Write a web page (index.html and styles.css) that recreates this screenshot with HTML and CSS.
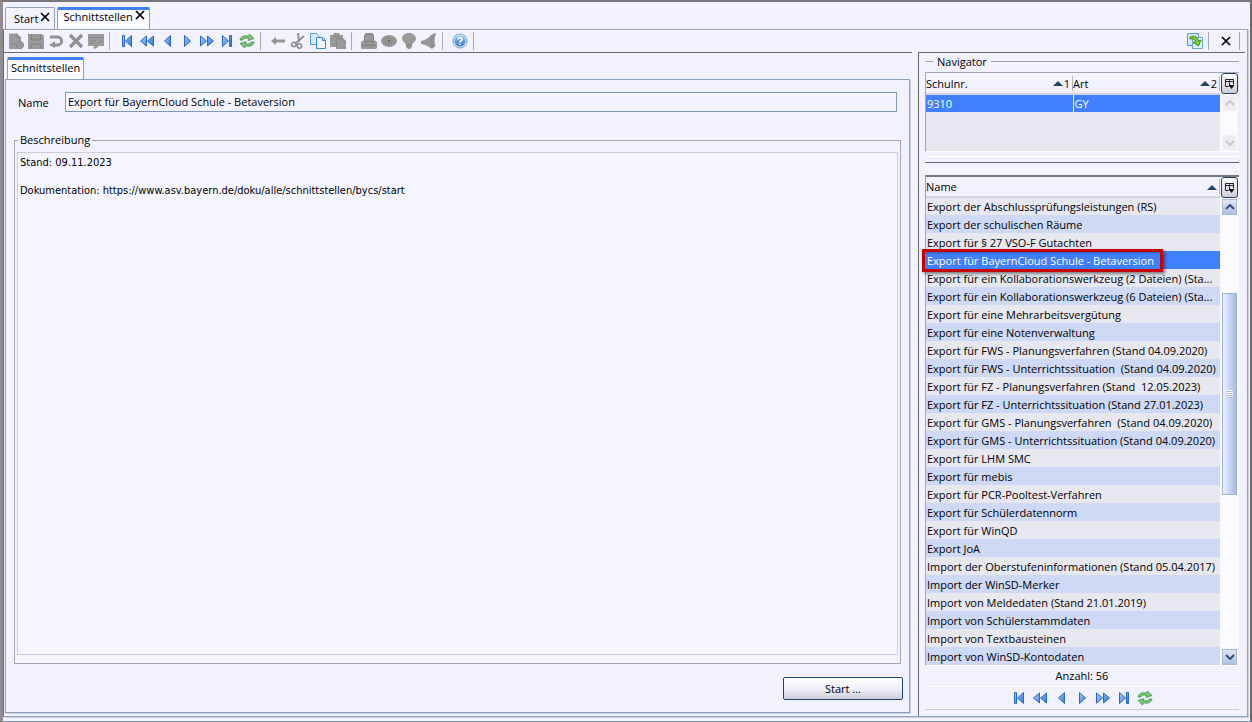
FILE: index.html
```html
<!DOCTYPE html>
<html lang="de">
<head>
<meta charset="utf-8">
<title>Schnittstellen</title>
<link rel="stylesheet" href="styles.css">
</head>
<body>
<svg class="defs" aria-hidden="true">
  <defs>
    <linearGradient id="blue" x1="0" y1="0" x2="1" y2="1"><stop offset="0" stop-color="#a6d0f8"/><stop offset="1" stop-color="#2f74d8"/></linearGradient>
    <linearGradient id="help" x1="0" y1="0" x2="0" y2="1"><stop offset="0" stop-color="#8fbdec"/><stop offset="1" stop-color="#3a78c0"/></linearGradient>
    <symbol id="first" viewBox="0 0 16 16"><path d="M3.500 2.500h2v11h-2zM12.500 2.500v11L6.500 8z" fill="url(#blue)" stroke="#2a68c8"/></symbol>
    <symbol id="rewind" viewBox="0 0 16 16"><path d="M7.500 3v10L1.500 8zM14.500 3v10L8.500 8z" fill="url(#blue)" stroke="#2a68c8"/></symbol>
    <symbol id="prev" viewBox="0 0 16 16"><path d="M11.500 2.500v11L5.500 8z" fill="url(#blue)" stroke="#2a68c8"/></symbol>
    <symbol id="next" viewBox="0 0 16 16"><path d="M5.500 2.500v11L11.500 8z" fill="url(#blue)" stroke="#2a68c8"/></symbol>
    <symbol id="forward" viewBox="0 0 16 16"><path d="M1.500 3v10L7.500 8zM8.500 3v10L14.500 8z" fill="url(#blue)" stroke="#2a68c8"/></symbol>
    <symbol id="last" viewBox="0 0 16 16"><path d="M3.500 2.500v11L9.500 8zM10.500 2.500h2v11h-2z" fill="url(#blue)" stroke="#2a68c8"/></symbol>
    <symbol id="refresh" viewBox="0 0 16 16"><path d="M1 7C1.500 3.500 5 2 9.500 3.200L10.500 1l4.500 4.500-6 2 .6-2C6.500 4.600 4.500 5.200 4 7zM15 9c-.5 3.500-4 5-8.500 3.800L5.500 15 1 10.500l6-2-.6 2c3 .9 5 .3 5.600-1.500z" fill="#7cc47a" stroke="#3d9444" stroke-width=".8"/></symbol>
    <symbol id="columns" viewBox="0 0 12 12"><path d="M1.500 1.500h8v5M1.500 1.500v7h3M1.500 3.500h8M5.500 1.500v7" fill="none" stroke="#222"/><path d="M4.500 7h6l-3 4z" fill="#111"/></symbol>
    <symbol id="close" viewBox="0 0 10 10"><path d="M1 1l8 8M9 1L1 9" stroke="#000" stroke-width="1.700"/></symbol>
    <symbol id="up" viewBox="0 0 10 6"><path d="M1 5l4-4 4 4" fill="none" stroke="currentColor" stroke-width="2"/></symbol>
    <symbol id="down" viewBox="0 0 10 6"><path d="M1 1l4 4 4-4" fill="none" stroke="currentColor" stroke-width="2"/></symbol>
  </defs>
</svg>
<div class="window">
  <nav class="tabs">
    <button class="tab tab-inactive">Start<svg class="x"><use href="#close"/></svg></button>
    <button class="tab tab-active">Schnittstellen<svg class="x"><use href="#close"/></svg></button>
  </nav>
  <div class="frame">
    <header class="toolbar">
      <div class="tools">
        <button class="tool" aria-label="Neu" disabled><svg viewBox="0 0 16 16"><path d="M1 1.500q0-1 1-1h7l4 4v5.500h1v1h1.500v3H14V16H2q-1 0-1-1z" fill="#9b9b9b"/><path d="M9 .5v4h4M3 11h5" stroke="#858585" fill="none"/><circle cx="12" cy="12" r="3.500" fill="#a2a2a2" stroke="#858585"/><path d="M10 12h4M12 10v4" stroke="#858585"/></svg></button>
        <button class="tool" aria-label="Speichern" disabled><svg viewBox="0 0 16 16"><path d="M0 1h14l2 2v13H0z" fill="#999"/><path d="M3.500 1v6h9V1M3.500 16v-5h9v5" stroke="#838383" fill="none"/></svg></button>
        <button class="tool" aria-label="Rückgängig" disabled><svg viewBox="0 0 16 16"><path d="M2 4h7.500C15 4 15 12 9.500 12H6" fill="none" stroke="#929292" stroke-width="3"/><path d="M7 8v7L1 12z" fill="#929292"/></svg></button>
        <button class="tool" aria-label="Löschen" disabled><svg viewBox="0 0 16 16"><path d="M2 2l12 12M14 2L2 14" stroke="#909090" stroke-width="3.200"/></svg></button>
        <button class="tool" aria-label="Bearbeiten" disabled><svg viewBox="0 0 16 16"><path d="M0 1h16v12h-5l-3 2.500H5L6 13H0z" fill="#9b9b9b"/><path d="M0 4.500h16M2 8h6M2 10.500h4M7 13l7-6" stroke="#888"/></svg></button>
        <span class="sep"></span>
        <button class="tool" aria-label="Erster"><svg><use href="#first"/></svg></button>
        <button class="tool" aria-label="Schnell zurück"><svg><use href="#rewind"/></svg></button>
        <button class="tool" aria-label="Zurück"><svg><use href="#prev"/></svg></button>
        <button class="tool" aria-label="Weiter"><svg><use href="#next"/></svg></button>
        <button class="tool" aria-label="Schnell weiter"><svg><use href="#forward"/></svg></button>
        <button class="tool" aria-label="Letzter"><svg><use href="#last"/></svg></button>
        <button class="tool" aria-label="Aktualisieren"><svg><use href="#refresh"/></svg></button>
        <span class="sep"></span>
        <button class="tool" aria-label="Pfeil" disabled><svg viewBox="0 0 16 16"><path d="M1 8l5-4v2.500h9v3H6V12z" fill="#939393"/></svg></button>
        <button class="tool" aria-label="Ausschneiden" disabled><svg viewBox="0 0 16 16"><path d="M8 0l1 9M14 3L5 11" stroke="#929292" stroke-width="2"/><circle cx="4" cy="11.500" r="2.200" fill="none" stroke="#8c8c8c" stroke-width="1.600"/><circle cx="9.500" cy="13" r="2.200" fill="none" stroke="#8c8c8c" stroke-width="1.600"/></svg></button>
        <button class="tool" aria-label="Kopieren"><svg viewBox="0 0 16 16"><path d="M.5.500h6l3 3v8h-9z" fill="#d9ebff" stroke="#5b97dc"/><path d="M6.500 4.500h6l3 3v8h-9z" fill="#eaf5ff" stroke="#3e86d6"/><path d="M12.500 4.500v3h3" fill="none" stroke="#3e86d6"/></svg></button>
        <button class="tool" aria-label="Einfügen" disabled><svg viewBox="0 0 16 16"><path d="M0 2h3l1-2h5l1 2h3v3l3 3v8H6v-2H0z" fill="#999"/><path d="M3 3.500h7M6.500 14V5.500H12l3.500 4" fill="none" stroke="#868686"/></svg></button>
        <span class="sep"></span>
        <button class="tool" aria-label="Drucken" disabled><svg viewBox="0 0 16 16"><path d="M5 0h6l2 2v5l3 2v6l-1 1H1l-1-1V9l3-2V2z" fill="#999"/><path d="M3.500 7V3l2-2h5l2 2v4M3 8.500h10M4.500 9v3h7V9M1 12.500h14" stroke="#818181" fill="none"/></svg></button>
        <button class="tool" aria-label="Vorschau" disabled><svg viewBox="0 0 16 16"><ellipse cx="8" cy="8" rx="8" ry="6" fill="#969696"/><circle cx="8" cy="8" r="3" fill="#a3a3a3" stroke="#858585"/><circle cx="8" cy="8" r="1.200" fill="#666"/></svg></button>
        <button class="tool" aria-label="Hinweis" disabled><svg viewBox="0 0 16 16"><path d="M8 0C4 0 1 2.500 1 5.500 1 9 5 9.500 5 12v2l2 2h2l2-2v-2c0-2.500 4-3 4-6.500C15 2.500 12 0 8 0z" fill="#999"/><path d="M5 11.500h6M5 13.500h6" stroke="#868686"/></svg></button>
        <button class="tool" aria-label="Alarm" disabled><svg viewBox="0 0 16 16"><path d="M14 0l1 1-1 3c-1 4 0 7 .5 9L12 15l-1 1-3-2C6 13 3 11 0 11V8c4-.5 7-3 10-6z" fill="#979797"/><path d="M13 2c-3 4-3 7-1 12" fill="none" stroke="#888"/></svg></button>
        <span class="sep"></span>
        <button class="tool" aria-label="Hilfe"><svg viewBox="0 0 16 16"><circle cx="8" cy="8" r="7" fill="#dcecfb" stroke="#6a9fd6"/><circle cx="8" cy="8" r="5.500" fill="url(#help)"/><path d="M6 6.500c0-3 4.200-2.500 4 0C10 8 8 7.500 8 9.500M8 10.500v1.500" fill="none" stroke="#fff" stroke-width="1.600"/></svg></button>
        <span class="sep"></span>
      </div>
      <div class="tools tools-right">
        <button class="tool" aria-label="Ansicht wechseln"><svg viewBox="0 0 16 16"><path d="M.5.500h11v12H.5z" fill="#d5e7fb" stroke="#5e94cc"/><path d="M5.500 4.500h10v11h-10z" fill="#e8f4ff" stroke="#6fa4d8"/><path d="M3 4c4-2 8 0 8.500 4L14 7l-2.500 6L6 9.500l2.500-.7C8.500 6.500 6.500 5 3 6z" fill="#86d22c" stroke="#3c8c20"/></svg></button>
        <span class="sep"></span>
        <button class="tool tool-close" aria-label="Schließen"><svg><use href="#close"/></svg></button>
        <span class="sep"></span>
      </div>
    </header>
    <div class="content">
      <main class="left">
        <div class="subtabs"><button class="tab tab-active tab-sub">Schnittstellen</button></div>
        <div class="panel">
          <div class="field"><label for="name">Name</label><input id="name" type="text" value="Export für BayernCloud Schule - Betaversion"></div>
          <fieldset class="group">
            <legend>Beschreibung</legend>
            <textarea aria-label="Beschreibung" readonly>Stand: 09.11.2023

Dokumentation: https://www.asv.bayern.de/doku/alle/schnittstellen/bycs/start</textarea>
          </fieldset>
          <div class="actions"><button class="start">Start ...</button></div>
        </div>
      </main>
      <aside class="right">
        <h2 class="nav-title">Navigator</h2>
        <div class="grid schools">
          <table>
            <thead><tr><th><div class="head">Schulnr.<span class="sort"><i class="tri"></i>1</span></div></th><th><div class="head">Art<span class="sort"><i class="tri"></i>2</span></div></th></tr></thead>
            <tbody><tr class="selected"><td>9310</td><td>GY</td></tr></tbody>
          </table>
          <div class="side">
            <button class="colbtn" aria-label="Spalten"><svg><use href="#columns"/></svg></button>
            <div class="scroll scroll-off"><button aria-label="Nach oben" disabled><svg><use href="#up"/></svg></button><button aria-label="Nach unten" disabled><svg><use href="#down"/></svg></button></div>
          </div>
        </div>
        <div class="divider"></div>
        <div class="grid exports">
          <table>
            <thead><tr><th><div class="head">Name<span class="sort"><i class="tri"></i></span></div></th></tr></thead>
            <tbody>
              <tr><td>Export der Abschlussprüfungsleistungen (RS)</td></tr>
              <tr><td>Export der schulischen Räume</td></tr>
              <tr><td>Export für § 27 VSO-F Gutachten</td></tr>
              <tr class="selected"><td><span class="mark">Export für BayernCloud Schule - Betaversion</span></td></tr>
              <tr><td>Export für ein Kollaborationswerkzeug (2 Dateien) (Sta...</td></tr>
              <tr><td>Export für ein Kollaborationswerkzeug (6 Dateien) (Sta...</td></tr>
              <tr><td>Export für eine Mehrarbeitsvergütung</td></tr>
              <tr><td>Export für eine Notenverwaltung</td></tr>
              <tr><td>Export für FWS - Planungsverfahren (Stand 04.09.2020)</td></tr>
              <tr><td>Export für FWS - Unterrichtssituation  (Stand 04.09.2020)</td></tr>
              <tr><td>Export für FZ - Planungsverfahren (Stand  12.05.2023)</td></tr>
              <tr><td>Export für FZ - Unterrichtssituation (Stand 27.01.2023)</td></tr>
              <tr><td>Export für GMS - Planungsverfahren  (Stand 04.09.2020)</td></tr>
              <tr><td>Export für GMS - Unterrichtssituation (Stand 04.09.2020)</td></tr>
              <tr><td>Export für LHM SMC</td></tr>
              <tr><td>Export für mebis</td></tr>
              <tr><td>Export für PCR-Pooltest-Verfahren</td></tr>
              <tr><td>Export für Schülerdatennorm</td></tr>
              <tr><td>Export für WinQD</td></tr>
              <tr><td>Export JoA</td></tr>
              <tr><td>Import der Oberstufeninformationen (Stand 05.04.2017)</td></tr>
              <tr><td>Import der WinSD-Merker</td></tr>
              <tr><td>Import von Meldedaten (Stand 21.01.2019)</td></tr>
              <tr><td>Import von Schülerstammdaten</td></tr>
              <tr><td>Import von Textbausteinen</td></tr>
              <tr><td>Import von WinSD-Kontodaten</td></tr>
            </tbody>
          </table>
          <div class="side">
            <button class="colbtn" aria-label="Spalten"><svg><use href="#columns"/></svg></button>
            <div class="scroll"><button aria-label="Nach oben"><svg><use href="#up"/></svg></button><div class="track"><div class="thumb"><i class="grip"></i></div></div><button aria-label="Nach unten"><svg><use href="#down"/></svg></button></div>
          </div>
        </div>
        <p class="count">Anzahl: 56</p>
        <div class="pager">
          <button class="tool" aria-label="Erster"><svg><use href="#first"/></svg></button>
          <button class="tool" aria-label="Schnell zurück"><svg><use href="#rewind"/></svg></button>
          <button class="tool" aria-label="Zurück"><svg><use href="#prev"/></svg></button>
          <button class="tool" aria-label="Weiter"><svg><use href="#next"/></svg></button>
          <button class="tool" aria-label="Schnell weiter"><svg><use href="#forward"/></svg></button>
          <button class="tool" aria-label="Letzter"><svg><use href="#last"/></svg></button>
          <button class="tool" aria-label="Aktualisieren"><svg><use href="#refresh"/></svg></button>
        </div>
      </aside>
    </div>
  </div>
</div>
</body>
</html>
```
FILE: styles.css
```css
* { box-sizing: border-box; }
body { margin: 0; background: #f2f2ff; color: #000; }
body, button, input, textarea { font: 11px/14px "Open Sans", "Noto Sans", sans-serif; }
button { border: 0; margin: 0; padding: 0; background: none; color: inherit; }
.defs { position: absolute; width: 0; height: 0; }
svg { display: block; }

.window {
  height: 100vh;
  display: flex;
  flex-direction: column;
  border: solid #68686c;
  border-width: 2px 2px 1px 3px;
  border-top-color: #77777c;
  border-left-color: #918c91;
  border-bottom-color: #8494ae;
  padding: 0 2px 4px 0;
}
.tabs { display: flex; gap: 2px; padding: 5px 0 0 2px; height: 27px; flex: none; }
.tab {
  display: flex;
  gap: 2px;
  height: 22px;
  border: 1px solid #8fa3bf;
  border-bottom: 0;
  border-radius: 2px 2px 0 0;
  padding: 4px 4px 0 8px;
  background: #f2f2ff;
}
.tab-active { background: #fafaff; border-top: 3px solid #3f7ff5; padding: 0 4px 0 5px; }
.tab-sub { padding: 1px 3px 0; }
.x { width: 10px; height: 10px; }

.frame {
  flex: 1;
  min-height: 0;
  display: flex;
  flex-direction: column;
  border: 1px solid #8fa3bf;
  border-left-color: #68686c;
  box-shadow: 1px 1px 0 #c8d0e0;
}
.toolbar { display: flex; justify-content: space-between; height: 22px; flex: none; border-top: 1px solid #fff; padding-bottom: 1px; }
.tools { display: flex; align-items: center; gap: 4px; padding-left: 4px; }
.tools-right { padding-right: 2px; }
.tool, .tool svg { width: 16px; height: 16px; }
.tool { flex: none; }
.tool-close { padding: 3px; }
.tool-close svg { width: 10px; height: 10px; }
.sep { width: 1px; height: 18px; background: #a9a9b0; margin: 0 5px 0 1px; }

.content { flex: 1; min-height: 0; display: flex; gap: 6px; padding-right: 1px; }
.left { flex: 1; min-width: 0; display: flex; flex-direction: column; border-top: 1px solid #68686c; padding: 4px 2px 3px 1px; }
.subtabs { height: 22px; padding-left: 2px; display: flex; flex: none; }
.panel {
  flex: 1;
  min-height: 0;
  display: flex;
  flex-direction: column;
  border: 1px solid #8fa3bf;
  box-shadow: 1px 1px 0 #c8d0e0;
  padding: 12px 6px 12px 8px;
}
.field { display: flex; align-items: center; padding: 0 6px 0 4px; }
.field label { width: 47px; padding-top: 2px; }
.field input { flex: 1; min-width: 0; height: 20px; border: 1px solid #8099b8; background: #f4f4ff; padding: 0 2px 2px; margin: 0; }
.group {
  flex: 1;
  min-height: 0;
  min-inline-size: 0;
  display: flex;
  margin: 21px 2px 13px 0;
  border: 1px solid #a6a6b2;
  padding: 5px 2px 8px;
}
.group legend { padding: 0 2px; margin-left: 1px; }
.group textarea {
  flex: 1;
  resize: none;
  border: 1px solid #cdcdd8;
  background: #f5f5ff;
  padding: 3px 2px;
  font-family: "DejaVu Sans Condensed", sans-serif;
}
.actions { display: flex; justify-content: flex-end; flex: none; }
.start {
  width: 120px;
  height: 23px;
  border: 1px solid #1b4272;
  border-radius: 2px;
  background: linear-gradient(#fff, #f0f0fa 50%, #cdcddc);
}

.right {
  width: 327px;
  flex: none;
  display: flex;
  flex-direction: column;
  border: solid #68686c;
  border-width: 1px 0 0 1px;
  padding: 0 6px 6px;
}
.content { padding-right: 2px; }
.nav-title { display: flex; align-items: center; gap: 4px; margin: 1px 0 3px; height: 15px; font-size: 11px; font-weight: 400; }
.nav-title::before, .nav-title::after { content: ""; height: 1px; background: #a6a6b2; width: 8px; }
.nav-title::after { flex: 1; }
.grid { display: flex; border: solid #a6a6b2; border-width: 1px 0 0 1px; border-bottom: 1px solid #fff; background: #fafaff; }
.grid table { flex: 1; min-width: 0; border-collapse: collapse; height: max-content; }
.schools { height: 80px; flex: none; background: #e7e7f0; }
.schools th { width: 50%; }
.exports { flex: 1; min-height: 0; border-top: 2px solid #77777c; }
th, td { padding: 0; text-align: left; font-weight: 400; white-space: pre; }
thead { height: 21px; background: #f2f2ff; }
.exports thead { height: 20px; }
thead tr { border-bottom: 2px solid #d2d2dc; }
.head { display: flex; justify-content: space-between; padding: 1px 2px 0 0; border-right: 1px solid #b5b5c2; }
.sort { display: flex; align-items: center; gap: 1px; }
.tri { border: solid transparent; border-width: 0 5px 5px; border-bottom-color: #24435f; }
td { height: 18px; line-height: 17px; padding-left: 1px; }
.schools td + td { border-left: 1px solid #fff; }
.exports tbody tr { background: #e7e7f0; }
.exports tbody tr:nth-child(even) { background: #cdd9f5; }
tbody tr.selected, .exports tbody tr.selected { background: #4080ff; color: #fff; }
.mark { position: relative; }
.mark::after {
  content: "";
  position: absolute;
  inset: -4px -9px -4px -5px;
  border: 3px solid #c80000;
  box-shadow: 2px 2px 3px #0007, inset 1px 1px 2px #0005;
}
.side { width: 18px; flex: none; display: flex; flex-direction: column; background: #fafaff; margin-right: 1px; }
.colbtn { height: 21px; flex: none; border: 1px solid #27405f; border-radius: 3px; margin-left: 1px; padding: 3px 2px; background: linear-gradient(#fff, #cdcddc); }
.colbtn svg { width: 12px; height: 12px; }
.scroll { flex: 1; min-height: 0; display: flex; flex-direction: column; justify-content: space-between; padding: 1px 1px 0 2px; color: #344f78; }
.scroll button { height: 16px; flex: none; border: 1px solid #a9b9d8; background: linear-gradient(#dfe7fa, #aebfe0); display: grid; place-items: center; }
.scroll button svg { width: 10px; height: 6px; }
.scroll-off { color: #c8c8cf; }
.scroll-off button { background: #ededf1; border-color: #f2f2f6; }
.track { flex: 1; display: flex; flex-direction: column; }
.track::before { content: ""; flex: 78; }
.track::after { content: ""; flex: 155; }
.thumb { flex: 201; border: 1px solid #9fb2d8; background: linear-gradient(90deg, #eef2ff, #c6d5f8 50%, #a9b9dc); display: grid; place-items: center; }
.grip { width: 7px; height: 8px; background: repeating-linear-gradient(#fff 0 1px, #adbde0 1px 2px); }
.divider {
  flex: none;
  height: 14px;
  margin: 4px 0 5px;
  border: solid #fff;
  border-width: 1px 0;
  background: linear-gradient(#68686c, #68686c) 0 5px / 100% 1px no-repeat;
}
.count { margin: 0; height: 20px; line-height: 20px; text-align: center; flex: none; }
.pager { display: flex; justify-content: center; gap: 5px; height: 24px; align-items: center; border-top: 1px solid #fff; border-bottom: 1px solid #cdcdd8; flex: none; }
```
